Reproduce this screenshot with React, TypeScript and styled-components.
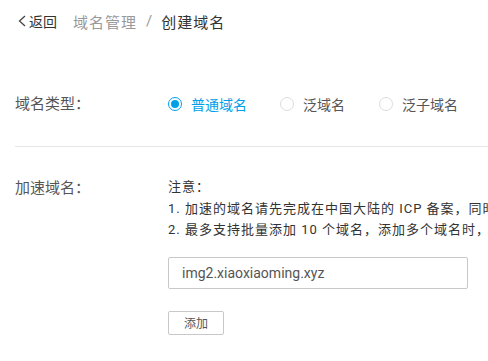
import React from 'react'
import styled, { createGlobalStyle } from 'styled-components'

const GlobalStyle = createGlobalStyle`
  html, body {
    margin: 0;
    padding: 0;
    background: #fff;
    overflow: hidden;
  }
  body {
    font-family: "Roboto", "Noto Sans CJK SC", sans-serif;
    color: #333;
  }
`

const Page = styled.div`
  width: 488px;
  height: 361px;
  overflow: hidden;
  padding-left: 15px;
  box-sizing: border-box;
`

const Header = styled.div`
  height: 40px;
  display: flex;
  align-items: center;
  font-size: 14px;
  padding-top: 1px;
`

const Back = styled.div`
  display: flex;
  align-items: center;
  color: #333;
  margin-left: 2px;
  margin-right: 16px;
  svg {
    margin-right: 2px;
  }
`

const Crumb = styled.span<{ $active?: boolean }>`
  color: ${(p) => (p.$active ? '#333' : '#999')};
  font-size: 15px;
  letter-spacing: 1px;
`

const Slash = styled.span`
  color: #999;
  margin: 0 9px 0 9px;
  font-size: 15px;
`

const Row = styled.div<{ $top: number }>`
  display: flex;
  align-items: flex-start;
  padding-top: ${(p) => p.$top}px;
`

const Label = styled.div`
  width: 153px;
  font-size: 15px;
  color: #555;
  line-height: 20px;
  flex-shrink: 0;
`

const Radios = styled.div`
  display: flex;
  align-items: center;
  height: 20px;
`

const RadioItem = styled.div<{ $gap: number }>`
  display: flex;
  align-items: center;
  margin-right: ${(p) => p.$gap}px;
`

const Circle = styled.span<{ $on?: boolean }>`
  width: 14px;
  height: 14px;
  border-radius: 50%;
  box-sizing: border-box;
  border: 1px solid ${(p) => (p.$on ? '#00a0e9' : '#ddd')};
  display: flex;
  align-items: center;
  justify-content: center;
  margin-right: 9px;
  &::after {
    content: '';
    width: 8px;
    height: 8px;
    border-radius: 50%;
    background: ${(p) => (p.$on ? '#00a0e9' : 'transparent')};
  }
`

const RadioText = styled.span<{ $on?: boolean }>`
  font-size: 14px;
  color: ${(p) => (p.$on ? '#00a0e9' : '#555')};
`

const Divider = styled.div`
  height: 1px;
  background: #e6e6ea;
  margin-top: 32px;
`

const Body = styled.div`
  display: flex;
  flex-direction: column;
`

const Note = styled.div`
  font-size: 13px;
  letter-spacing: 1px;
  color: #333;
  line-height: 21.5px;
  white-space: nowrap;
  margin-top: -2px;
`

const Input = styled.div`
  margin-top: 16px;
  width: 300px;
  height: 32px;
  box-sizing: border-box;
  border: 1px solid #c8c8c8;
  border-radius: 2px;
  display: flex;
  align-items: center;
  padding-left: 13px;
  font-size: 14px;
  color: #555;
`

const Button = styled.div`
  margin-top: 22px;
  width: 56px;
  height: 24px;
  box-sizing: border-box;
  border: 1px solid #c8c8c8;
  border-radius: 2px;
  display: flex;
  align-items: center;
  justify-content: center;
  font-size: 12px;
  color: #555;
`

const App = () => {
  return (
    <Page>
      <GlobalStyle />
      <Header>
        <Back>
          <svg width="10" height="14" viewBox="0 0 10 14">
            <path d="M8 2 L2.5 7 L8 12" fill="none" stroke="#444" strokeWidth="1.3" />
          </svg>
          <span>返回</span>
        </Back>
        <Crumb>域名管理</Crumb>
        <Slash>/</Slash>
        <Crumb $active>创建域名</Crumb>
      </Header>

      <Row $top={53}>
        <Label>域名类型：</Label>
        <Radios>
          <RadioItem $gap={33}>
            <Circle $on />
            <RadioText $on>普通域名</RadioText>
          </RadioItem>
          <RadioItem $gap={34}>
            <Circle />
            <RadioText>泛域名</RadioText>
          </RadioItem>
          <RadioItem $gap={0}>
            <Circle />
            <RadioText>泛子域名</RadioText>
          </RadioItem>
        </Radios>
      </Row>

      <Divider />

      <Row $top={31}>
        <Label>加速域名：</Label>
        <Body>
          <Note>
            注意：
            <br />
            1. 加速的域名请先完成在中国大陆的 ICP 备案，同时需要保证该域名已完成接入
            <br />
            2. 最多支持批量添加 10 个域名，添加多个域名时，请使用换行分隔
          </Note>
          <Input>img2.xiaoxiaoming.xyz</Input>
          <Button>添加</Button>
        </Body>
      </Row>
    </Page>
  )
}

export default App
